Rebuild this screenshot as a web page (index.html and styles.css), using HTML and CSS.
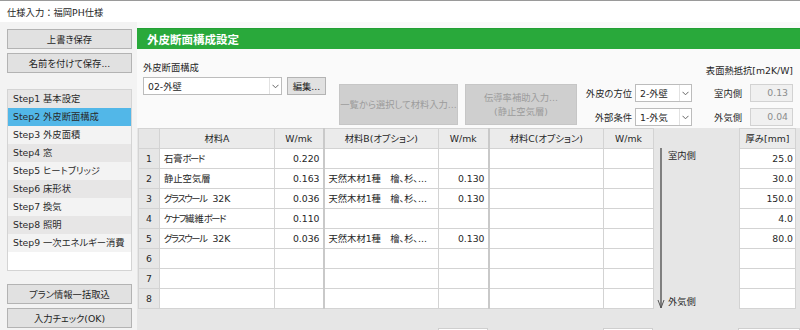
FILE: index.html
```html
<!DOCTYPE html>
<html lang="ja">
<head>
<meta charset="utf-8">
<title>仕様入力</title>
<link rel="stylesheet" href="styles.css">
</head>
<body>
<div class="titlebar">仕様入力：福岡PH仕様</div>
<div class="app">
  <aside class="sidebar">
    <div class="btn">上書き保存</div>
    <div class="btn">名前を付けて保存...</div>
    <div class="steps">
      <div class="step shade">Step1 基本設定</div>
      <div class="step active">Step2 外皮断面構成</div>
      <div class="step light">Step3 外皮面積</div>
      <div class="step shade">Step4 窓</div>
      <div class="step light">Step5 ヒートブリッジ</div>
      <div class="step shade">Step6 床形状</div>
      <div class="step light">Step7 換気</div>
      <div class="step shade">Step8 照明</div>
      <div class="step light">Step9 一次エネルギー消費</div>
    </div>
    <div class="btn btn-low">プラン情報一括取込</div>
    <div class="btn">入力チェック(OK)</div>
  </aside>
  <main class="main">
    <div class="header">外皮断面構成設定</div>
    <div class="controls">
      <div class="section">
        <div class="label">外皮断面構成</div>
        <div class="section-row">
          <div class="select select-wide"><span class="sel-text">02-外壁</span><span class="sel-arrow"><svg width="7" height="5" viewBox="0 0 7 5"><polyline points="0.5,0.8 3.5,3.8 6.5,0.8" fill="none" stroke="#666" stroke-width="1"/></svg></span></div>
          <div class="btn btn-edit">編集...</div>
        </div>
      </div>
      <div class="btn-dis btn-dis1">一覧から選択して材料入力...</div>
      <div class="btn-dis btn-dis2">伝導率補助入力...<br>(静止空気層)</div>
      <div class="orient">
        <div class="olabel">外皮の方位</div>
        <div class="select select-small"><span class="sel-text">2-外壁</span><span class="sel-arrow"><svg width="7" height="5" viewBox="0 0 7 5"><polyline points="0.5,0.8 3.5,3.8 6.5,0.8" fill="none" stroke="#666" stroke-width="1"/></svg></span></div>
        <div class="olabel">外部条件</div>
        <div class="select select-small"><span class="sel-text">1-外気</span><span class="sel-arrow"><svg width="7" height="5" viewBox="0 0 7 5"><polyline points="0.5,0.8 3.5,3.8 6.5,0.8" fill="none" stroke="#666" stroke-width="1"/></svg></span></div>
      </div>
      <div class="surface">
        <div class="surface-title">表面熱抵抗[m2K/W]</div>
        <div class="surface-rows">
          <div class="slabel">室内側</div>
          <div class="sinput">0.13</div>
          <div class="slabel">外気側</div>
          <div class="sinput">0.04</div>
        </div>
      </div>
    </div>
    <div class="grid">
      <table class="tbl">
        <colgroup>
          <col class="c-no"><col class="c-name"><col class="c-w1"><col class="c-name"><col class="c-w"><col class="c-name"><col class="c-w"><col class="c-axis"><col class="c-th">
        </colgroup>
        <tbody>
          <tr class="head">
            <th class="no"></th><th>材料A</th><th>W/mk</th><th class="grp">材料B(オプション)</th><th>W/mk</th><th class="grp">材料C(オプション)</th><th>W/mk</th>
            <td class="axis" rowspan="9"><div class="axis-inner"><svg class="axis-arrow" width="14" height="162" viewBox="0 0 14 162"><line x1="7" y1="0" x2="7" y2="160" stroke="#666" stroke-width="1.6"/><polyline points="4,152 7,160 10,152" fill="none" stroke="#555" stroke-width="1"/></svg><div class="axis-labels"><span>室内側</span><span>外気側</span></div></div></td>
            <th class="th">厚み[mm]</th>
          </tr>
          <tr><td class="no">1</td><td class="txt">石膏<span class="kana">ボード</span></td><td class="num">0.220</td><td class="txt grp"></td><td class="num"></td><td class="txt grp"></td><td class="num"></td><td class="num th">25.0</td></tr>
          <tr><td class="no">2</td><td class="txt">静止空気層</td><td class="num">0.163</td><td class="txt grp">天然木材1種　檜、杉、...</td><td class="num">0.130</td><td class="txt grp"></td><td class="num"></td><td class="num th">30.0</td></tr>
          <tr><td class="no">3</td><td class="txt"><span class="kana">グラスウール</span>  32K</td><td class="num">0.036</td><td class="txt grp">天然木材1種　檜、杉、...</td><td class="num">0.130</td><td class="txt grp"></td><td class="num"></td><td class="num th">150.0</td></tr>
          <tr><td class="no">4</td><td class="txt"><span class="kana">ケナフ</span>繊維<span class="kana">ボード</span></td><td class="num">0.110</td><td class="txt grp"></td><td class="num"></td><td class="txt grp"></td><td class="num"></td><td class="num th">4.0</td></tr>
          <tr><td class="no">5</td><td class="txt"><span class="kana">グラスウール</span>  32K</td><td class="num">0.036</td><td class="txt grp">天然木材1種　檜、杉、...</td><td class="num">0.130</td><td class="txt grp"></td><td class="num"></td><td class="num th">80.0</td></tr>
          <tr><td class="no">6</td><td class="txt"></td><td class="num"></td><td class="txt grp"></td><td class="num"></td><td class="txt grp"></td><td class="num"></td><td class="num th"></td></tr>
          <tr><td class="no">7</td><td class="txt"></td><td class="num"></td><td class="txt grp"></td><td class="num"></td><td class="txt grp"></td><td class="num"></td><td class="num th"></td></tr>
          <tr><td class="no">8</td><td class="txt"></td><td class="num"></td><td class="txt grp"></td><td class="num"></td><td class="txt grp"></td><td class="num"></td><td class="num th"></td></tr>
        </tbody>
      </table>
      <div class="totals">
        <div class="tbox tbox-b"></div>
        <div class="tbox tbox-c"></div>
        <div class="tbox tbox-t"></div>
      </div>
    </div>
  </main>
</div>
</body>
</html>
```

FILE: styles.css
```css
* { box-sizing: border-box; margin: 0; padding: 0; }
html, body { width: 800px; height: 330px; overflow: hidden; }
body {
  font-family: "DejaVu Sans", "Noto Sans CJK JP", sans-serif;
  font-size: 9.3px;
  color: #262626;
  background: #f7f7f7;
  font-feature-settings: "palt";
}
.titlebar {
  height: 22px;
  background: #fff;
  border-top: 1px solid #9a9a9a;
  display: flex;
  align-items: center;
  padding-left: 7px;
  font-feature-settings: normal;
}
.app { display: flex; height: 308px; }

/* sidebar */
.sidebar {
  width: 137px;
  flex: none;
  padding: 7px 0 0 7px;
  display: flex;
  flex-direction: column;
  background: #f3f3f3;
}
.btn {
  height: 20px;
  width: 125px;
  background: #e1e1e1;
  border: 1px solid #b3b3b3;
  display: flex;
  align-items: center;
  justify-content: center;
  color: #1e1e1e;
}
.btn + .btn { margin-top: 4px; }
.steps {
  margin-top: 16px;
  width: 125px;
  height: 182px;
  background: #fff;
  border: 1px solid #d4d4d4;
}
.step { height: 18px; line-height: 18px; padding-left: 5px; color: #2a2a2a; }
.step.shade { background: #e7e6e6; }
.step.light { background: #f3f3f3; }
.step.active { background: #52b7e8; }
.steps + .btn-low { margin-top: 13px; }

/* main */
.main { flex: 1; display: flex; flex-direction: column; padding-top: 6px; background: #fafafa; }
.header {
  height: 21px;
  flex: none;
  background: #29a93b;
  border-top: 1px solid #24a035;
  color: #fff;
  font-family: "Noto Sans CJK JP", sans-serif;
  font-weight: bold;
  font-size: 11.5px;
  display: flex;
  align-items: center;
  padding-left: 10px;
}
.controls { height: 79px; flex: none; display: flex; align-items: flex-start; }
.section { margin-left: 6px; padding-top: 12px; }
.label { line-height: 14px; height: 14px; }
.section-row { display: flex; gap: 5px; margin-top: 2px; }
.select {
  height: 18px;
  background: #fff;
  border: 1px solid #bcbcbc;
  display: flex;
  align-items: center;
}
.sel-text { flex: 1; padding-left: 4px; white-space: nowrap; }
.sel-arrow {
  width: 12px;
  height: 100%;
  border-left: 1px solid #e2e2e2;
  display: flex;
  align-items: center;
  justify-content: center;
}
.select-wide { width: 139px; }
.select-small { width: 57px; }
.btn-edit { width: 39px; height: 18px; }
.btn-dis {
  margin-top: 35px;
  height: 41px;
  background: #cfcfcf;
  border: 1px solid #c6c6c6;
  color: #9c9c9c;
  display: flex;
  align-items: center;
  justify-content: center;
  text-align: center;
  line-height: 14px;
}
.btn-dis1 { width: 119px; margin-left: 13px; }
.btn-dis2 { width: 112px; margin-left: 7px; }
.orient {
  margin-left: 8px;
  margin-top: 35px;
  display: grid;
  grid-template-columns: 47px 57px;
  column-gap: 3px;
  row-gap: 6px;
  align-items: center;
}
.olabel { text-align: right; white-space: nowrap; }
.surface {
  margin-left: auto;
  margin-right: 7px;
  margin-top: 16px;
  display: flex;
  flex-direction: column;
  align-items: flex-end;
}
.surface-title { line-height: 12px; white-space: nowrap; }
.surface-rows {
  margin-top: 7px;
  display: grid;
  grid-template-columns: auto 43px;
  column-gap: 8px;
  row-gap: 6px;
  align-items: center;
}
.slabel { white-space: nowrap; }
.sinput {
  height: 18px;
  background: #f0f0f0;
  border: 1px solid #d2d2d2;
  color: #8c8c8c;
  text-align: right;
  padding-right: 4px;
  line-height: 16px;
}

/* grid */
.grid { flex: 1; background: #e6e6e6; padding-left: 1px; }
.tbl {
  border-collapse: collapse;
  table-layout: fixed;
  width: 657px;
}
.c-no { width: 21px; }
.c-name { width: 115px; }
.c-w1 { width: 49px; }
.c-w { width: 50px; }
.c-axis { width: 86px; }
.c-th { width: 56px; }
.tbl tr { height: 20px; }
.tbl th, .tbl td {
  border: 1px solid #d3d3d3;
  height: 20px;
  padding: 0;
  white-space: nowrap;
  overflow: hidden;
  font-weight: normal;
  line-height: 12px;
}
.tbl th { background: #ebebeb; text-align: center; }
.tbl td { background: #fff; }
.tbl td.no, .tbl th.no { background: #e6e6e6; text-align: center; }
.tbl .grp { border-left: 2px solid #c9c9c9; }
.tbl .txt { padding-left: 4px; text-align: left; white-space: pre; }
.kana { letter-spacing: -1.4px; }
.tbl .num { padding-right: 3px; text-align: right; }
.tbl td.th { padding-right: 2px; }
.tbl td.axis {
  background: #e6e6e6;
  border-top: none;
  border-bottom: none;
  vertical-align: top;
}
.axis-inner { display: flex; padding-top: 19px; height: 180px; }
.axis-arrow { flex: none; display: block; }
.axis-labels {
  display: flex;
  flex-direction: column;
  justify-content: space-between;
  height: 162px;
  line-height: 16px;
}
.totals {
  margin-top: 19px;
  display: grid;
  grid-template-columns: 21px 115px 49px 115px 50px 115px 50px 85px 62px;
  height: 20px;
}
.tbox { background: #fff; border: 1px solid #cfcfcf; }
.tbox-b { grid-column: 5; }
.tbox-c { grid-column: 7; }
.tbox-t { grid-column: 9; }
```
